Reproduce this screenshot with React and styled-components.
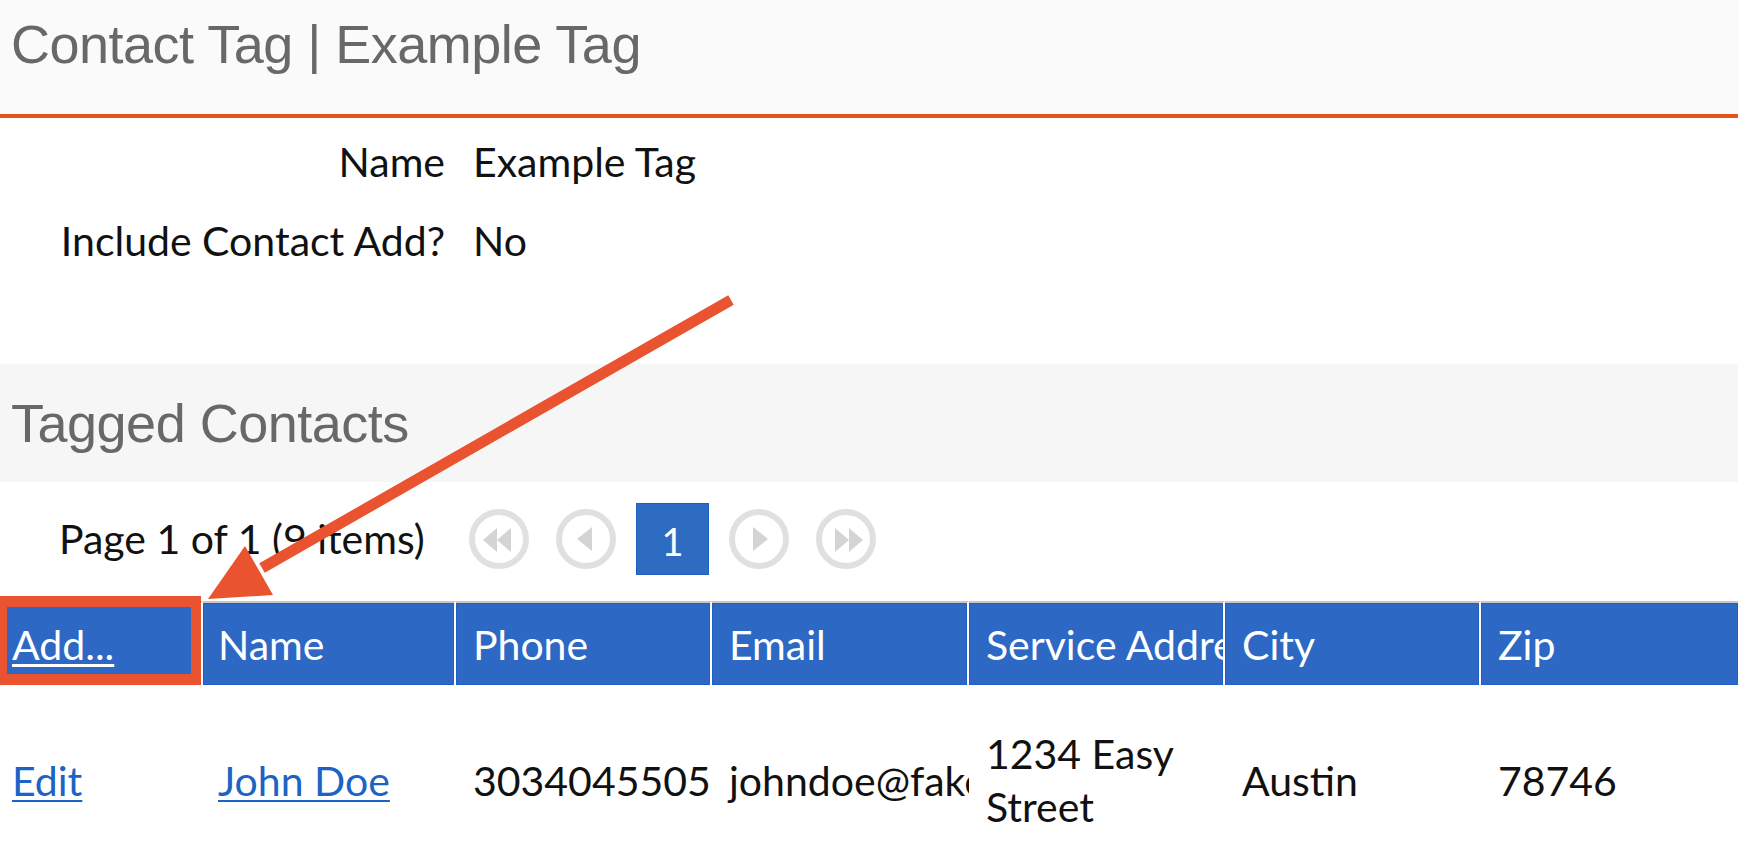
import React from "react";
import styled, { createGlobalStyle } from "styled-components";

const Global = createGlobalStyle`
  html, body { margin: 0; padding: 0; overflow: hidden; background: #fff; }
  body { font-family: Lato, "Liberation Sans", sans-serif; color: #111; }
  * { box-sizing: border-box; }
`;

const Page = styled.div`
  position: relative;
  width: 100%;
  height: 862px;
  overflow: hidden;
  font-size: 41px;
`;

const TitleBar = styled.header`
  height: 118px;
  padding: 13px 0 0 11px;
  background: #fafafa;
  border-bottom: 4px solid #e8501d;
`;

const Heading = styled.h1`
  margin: 0;
  font-family: "Liberation Sans", Arial, sans-serif;
  font-weight: normal;
  font-size: 54px;
  line-height: 62px;
  letter-spacing: -0.5px;
  color: #686868;
`;

const Details = styled.dl`
  margin: 0;
  padding: 4px 0 84px;
  display: grid;
  grid-template-columns: 445px auto;
  grid-auto-rows: 79px;
  column-gap: 28px;
  align-items: center;
`;

const Label = styled.dt`
  text-align: right;
  white-space: nowrap;
`;

const Value = styled.dd`
  margin: 0;
`;

const SectionBar = styled.div`
  height: 118px;
  padding-left: 11px;
  display: flex;
  align-items: center;
  background: #f6f6f6;
`;

const PagerRow = styled.div`
  height: 119px;
  padding: 0 0 6px 59px;
  display: flex;
  align-items: center;
`;

const PageInfo = styled.div`
  width: 410px;
  white-space: nowrap;
`;

const Pager = styled.div`
  display: flex;
  align-items: center;
  gap: 20px;
`;

const PagerCircle = styled.button`
  width: 60px;
  height: 60px;
  padding: 0;
  margin: ${(p) => p.$margin || "0"};
  border: none;
  background: none;
  display: flex;
  align-items: center;
  justify-content: center;
  svg { display: block; }
`;

const PageBox = styled.div`
  width: 73px;
  height: 72px;
  padding-top: 4px;
  background: #2d6cc1;
  border: 1px solid #1f5fc2;
  color: #fff;
  font-size: 38px;
  display: flex;
  align-items: center;
  justify-content: center;
`;

const Table = styled.table`
  width: 100%;
  table-layout: fixed;
  border-collapse: separate;
  border-spacing: 0;
`;

const HeadCell = styled.th`
  position: relative;
  height: 84px;
  padding: 0 0 0 ${(p) => p.$pad || 17}px;
  background: #2d68c4;
  border-top: 2px solid #c8c8c8;
  border-right: ${(p) => (p.$last ? "none" : "2px solid #fff")};
  box-shadow: inset 0 0 0 1px #1f5fc8;
  color: #fff;
  font-weight: normal;
  text-align: left;
  white-space: nowrap;
  overflow: ${(p) => (p.$open ? "visible" : "hidden")};
`;

const Cell = styled.td`
  height: 190px;
  padding: 0 0 0 ${(p) => p.$pad || 17}px;
  line-height: 53px;
  vertical-align: middle;
  overflow: hidden;
  white-space: ${(p) => (p.$wrap ? "normal" : "nowrap")};
`;

const HeadLink = styled.a`
  color: #fff;
  text-decoration: underline;
  text-underline-offset: 4px;
  text-decoration-thickness: 3px;
`;

const Link = styled.a`
  color: #1c63c6;
  text-decoration: underline;
  text-underline-offset: 4px;
  text-decoration-thickness: 2px;
`;

const Highlight = styled.span`
  position: absolute;
  left: 0;
  right: 0;
  top: -7px;
  bottom: 0;
  border-style: solid;
  border-color: #ea5330;
  border-width: 11px 10px 11px 7px;
  pointer-events: none;
`;

const ArrowLayer = styled.svg`
  position: absolute;
  left: 0;
  top: 0;
  pointer-events: none;
`;

const ring = "#e0e0e0";
const tri = "#d4d4d4";

function CircleIcon({ kind }) {
  const shapes = {
    first: (
      <>
        <polygon points="14,31 28,19 28,43" fill={tri} />
        <polygon points="28,31 42,19 42,43" fill={tri} />
      </>
    ),
    prev: <polygon points="21,30 36,18 36,42" fill={tri} />,
    next: <polygon points="39,30 24,18 24,42" fill={tri} />,
    last: (
      <>
        <polygon points="33,31 19,19 19,43" fill={tri} />
        <polygon points="47,31 33,19 33,43" fill={tri} />
      </>
    ),
  };
  return (
    <svg width="60" height="60" viewBox="0 0 60 60">
      <circle cx="30" cy="30" r="27" fill="#fff" stroke={ring} strokeWidth="6" />
      {shapes[kind]}
    </svg>
  );
}

export default function App() {
  return (
    <Page>
      <Global />
      <TitleBar>
        <Heading>Contact Tag | Example Tag</Heading>
      </TitleBar>

      <Details>
        <Label>Name</Label>
        <Value>Example Tag</Value>
        <Label>Include Contact Add?</Label>
        <Value>No</Value>
      </Details>

      <SectionBar>
        <Heading as="h2">Tagged Contacts</Heading>
      </SectionBar>

      <PagerRow>
        <PageInfo>Page 1 of 1 (9 items)</PageInfo>
        <Pager>
          <PagerCircle $margin="0 7px 0 0" aria-label="First page">
            <CircleIcon kind="first" />
          </PagerCircle>
          <PagerCircle aria-label="Previous page">
            <CircleIcon kind="prev" />
          </PagerCircle>
          <PageBox>1</PageBox>
          <PagerCircle aria-label="Next page">
            <CircleIcon kind="next" />
          </PagerCircle>
          <PagerCircle $margin="0 0 0 7px" aria-label="Last page">
            <CircleIcon kind="last" />
          </PagerCircle>
        </Pager>
      </PagerRow>

      <Table>
        <colgroup>
          <col style={{ width: 203 }} />
          <col style={{ width: 253 }} />
          <col style={{ width: 256 }} />
          <col style={{ width: 257 }} />
          <col style={{ width: 256 }} />
          <col style={{ width: 256 }} />
          <col />
        </colgroup>
        <thead>
          <tr>
            <HeadCell $pad={12} $open>
              <HeadLink href="#">Add...</HeadLink>
              <Highlight />
            </HeadCell>
            <HeadCell $pad={15}>Name</HeadCell>
            <HeadCell>Phone</HeadCell>
            <HeadCell>Email</HeadCell>
            <HeadCell>Service Address</HeadCell>
            <HeadCell>City</HeadCell>
            <HeadCell $last>Zip</HeadCell>
          </tr>
        </thead>
        <tbody>
          <tr>
            <Cell $pad={12}>
              <Link href="#">Edit</Link>
            </Cell>
            <Cell $pad={15}>
              <Link href="#">John Doe</Link>
            </Cell>
            <Cell>3034045505</Cell>
            <Cell>johndoe@fakeemail.com</Cell>
            <Cell $wrap>1234 Easy Street</Cell>
            <Cell>Austin</Cell>
            <Cell>78746</Cell>
          </tr>
        </tbody>
      </Table>

      <ArrowLayer width="1738" height="862" viewBox="0 0 1738 862">
        <line x1="731" y1="300" x2="262" y2="568" stroke="#ea5330" strokeWidth="11" />
        <polygon points="208,599 273,595 245,546" fill="#ea5330" />
      </ArrowLayer>
    </Page>
  );
}
